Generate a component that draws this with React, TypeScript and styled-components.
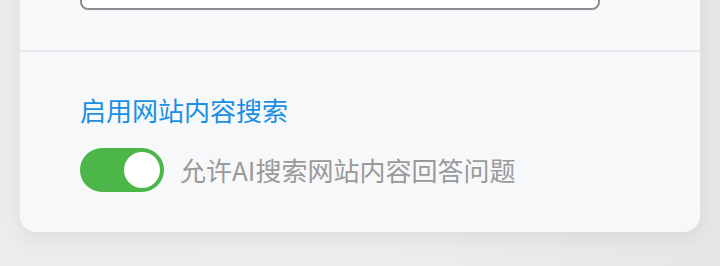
import React, { useState } from 'react';
import styled, { createGlobalStyle } from 'styled-components';

const GlobalStyle = createGlobalStyle`
  html, body {
    margin: 0;
    padding: 0;
    background: #ebebeb;
    font-family: "Noto Sans CJK SC", "Noto Sans", sans-serif;
    overflow: hidden;
  }
`;

const App: React.FC = () => {
  const [enabled, setEnabled] = useState(true);

  return (
    <>
      <GlobalStyle />
      <Page>
        <Card>
          <InputSection>
            <TextInput />
          </InputSection>
          <Divider />
          <SettingSection>
            <SettingTitle>启用网站内容搜索</SettingTitle>
            <SwitchRow>
              <Switch $on={enabled} onClick={() => setEnabled(!enabled)}>
                <Knob $on={enabled} />
              </Switch>
              <SwitchLabel>允许AI搜索网站内容回答问题</SwitchLabel>
            </SwitchRow>
          </SettingSection>
        </Card>
      </Page>
    </>
  );
};

const Page = styled.div`
  display: flow-root;
  width: 720px;
  height: 266px;
  padding: 0 20px;
  box-sizing: border-box;
  overflow: hidden;
  background: linear-gradient(90deg, #ececec 0%, #eeeeee 50%, #e6e6e6 100%);
`;

const Card = styled.div`
  margin-top: -70px;
  background: #f7f8fa;
  border-radius: 16px;
  box-shadow: 0 8px 20px rgba(0, 0, 0, 0.06);
`;

const InputSection = styled.div`
  padding: 20px 60px 40px;
`;

const TextInput = styled.div`
  width: 520px;
  height: 60px;
  box-sizing: border-box;
  background: #ffffff;
  border: 2px solid #8a8c90;
  border-radius: 8px;
`;

const Divider = styled.div`
  height: 2px;
  background: #e9eaed;
`;

const SettingSection = styled.div`
  padding: 40px 60px 40px;
  display: flex;
  flex-direction: column;
  gap: 20px;
`;

const SettingTitle = styled.div`
  font-size: 26px;
  line-height: 36px;
  color: #1a8fe3;
`;

const SwitchRow = styled.div`
  display: flex;
  align-items: center;
  gap: 16px;
`;

const Switch = styled.div<{ $on: boolean }>`
  width: 84px;
  height: 44px;
  border-radius: 22px;
  background: ${(p) => (p.$on ? '#4cb748' : '#cccccc')};
  display: flex;
  align-items: center;
  justify-content: ${(p) => (p.$on ? 'flex-end' : 'flex-start')};
  padding: 0 4px;
  box-sizing: border-box;
  cursor: pointer;
  flex-shrink: 0;
`;

const Knob = styled.div<{ $on: boolean }>`
  width: 36px;
  height: 36px;
  border-radius: 50%;
  background: #ffffff;
`;

const SwitchLabel = styled.div`
  font-size: 26px;
  line-height: 36px;
  color: #9a9a9a;
`;

export default App;
